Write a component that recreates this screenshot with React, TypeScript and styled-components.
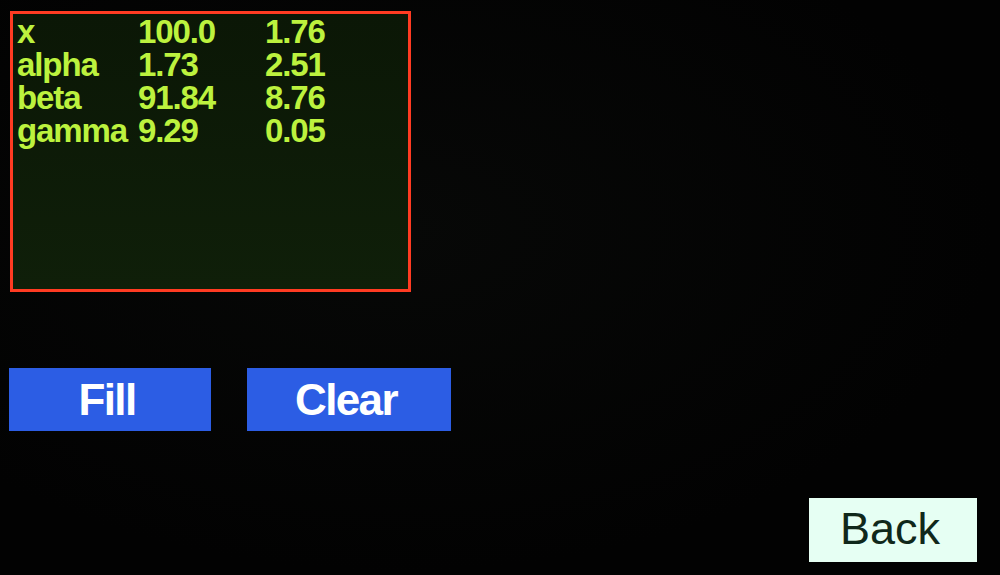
import React from 'react'
import styled, { createGlobalStyle } from 'styled-components'

const GlobalStyle = createGlobalStyle`
  html, body {
    margin: 0;
    padding: 0;
    background: #020202;
  }
`

const Screen = styled.div`
  width: 1000px;
  height: 575px;
  box-sizing: border-box;
  padding: 11px 23px 13px 10px;
  display: flex;
  flex-direction: column;
  background: radial-gradient(ellipse at 40% 40%, #070807 0%, #020202 70%);
  font-family: 'Liberation Sans', Arial, sans-serif;
`

const DataPanel = styled.div`
  width: 401px;
  height: 281px;
  box-sizing: border-box;
  border: 3px solid #ff3b22;
  background: linear-gradient(180deg, #0b1706 0%, #0f1f09 100%);
  padding: 1px 0 0 4px;
`

const DataGrid = styled.div`
  display: grid;
  grid-template-columns: 121px 127px auto;
  grid-auto-rows: 33px;
  color: #bcf23e;
  font-weight: 700;
  font-size: 33px;
  line-height: 33px;
  letter-spacing: -1.1px;
`

const Cell = styled.div`
  white-space: nowrap;
  overflow: visible;
`

const ButtonRow = styled.div`
  display: flex;
  gap: 36px;
  margin-top: 76px;
  margin-left: -1px;
`

const ActionButton = styled.button<{ $width: number }>`
  width: ${(p) => p.$width}px;
  height: 63px;
  border: none;
  padding: 0 6px 0 0;
  background: #2c5de4;
  color: #ffffff;
  font-family: 'Liberation Sans', Arial, sans-serif;
  font-weight: 700;
  font-size: 44px;
  letter-spacing: -1.6px;
  display: flex;
  align-items: center;
  justify-content: center;
`

const BackButton = styled.button`
  margin-top: auto;
  align-self: flex-end;
  width: 168px;
  height: 64px;
  border: none;
  padding: 0 6px 2px 0;
  background: #e6fff3;
  color: #10281a;
  font-family: 'Liberation Sans', Arial, sans-serif;
  font-weight: 400;
  font-size: 45px;
  display: flex;
  align-items: center;
  justify-content: center;
`

const rows = [
  ['x', '100.0', '1.76'],
  ['alpha', '1.73', '2.51'],
  ['beta', '91.84', '8.76'],
  ['gamma', '9.29', '0.05'],
]

export default function App() {
  return (
    <>
      <GlobalStyle />
      <Screen>
        <DataPanel>
          <DataGrid>
            {rows.map((row) =>
              row.map((value, i) => <Cell key={row[0] + i}>{value}</Cell>)
            )}
          </DataGrid>
        </DataPanel>
        <ButtonRow>
          <ActionButton $width={202}>Fill</ActionButton>
          <ActionButton $width={204}>Clear</ActionButton>
        </ButtonRow>
        <BackButton>Back</BackButton>
      </Screen>
    </>
  )
}
